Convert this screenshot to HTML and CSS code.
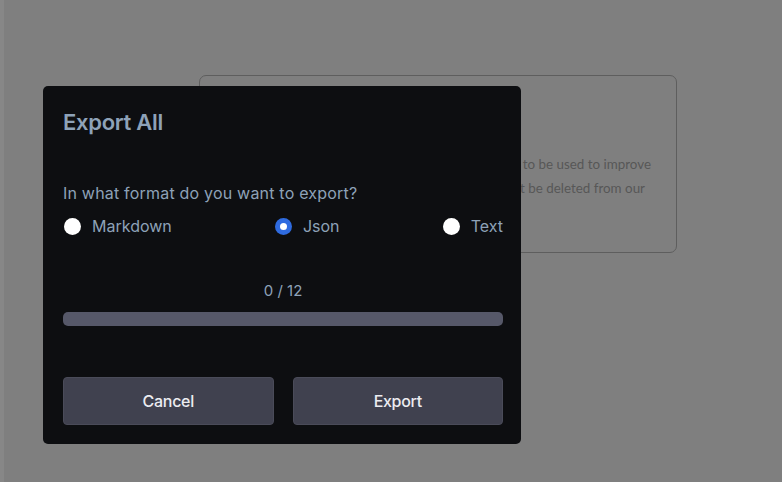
FILE: index.html
```html
<!DOCTYPE html>
<html lang="en">
<head>
<meta charset="utf-8">
<title>Export All</title>
<link rel="stylesheet" href="styles.css">
</head>
<body>
<div class="app">
  <div class="rail"></div>
  <main class="page">
    <section class="notice">
      <div class="notice-line">Conversations may be reviewed by our AI trainers to be used to improve</div>
      <div class="notice-line second">our systems. Please don't share sensitive info, it can't be deleted from our</div>
    </section>
  </main>

  <div class="modal" role="dialog" aria-labelledby="modal-title">
    <h2 class="modal-title" id="modal-title">Export All</h2>
    <p class="question">In what format do you want to export?</p>
    <div class="options">
      <label class="option"><span class="radio"></span><span>Markdown</span></label>
      <label class="option"><span class="radio checked"></span><span>Json</span></label>
      <label class="option"><span class="radio"></span><span>Text</span></label>
    </div>
    <div class="progress-label">0 / 12</div>
    <div class="progress"></div>
    <div class="actions">
      <button class="btn">Cancel</button>
      <button class="btn">Export</button>
    </div>
  </div>
</div>
</body>
</html>
```

FILE: styles.css
```css
* { box-sizing: border-box; }

html, body {
  margin: 0;
  padding: 0;
  width: 782px;
  height: 482px;
  overflow: hidden;
  background: #7f7f7f;
}

.app {
  position: relative;
  display: flex;
  width: 782px;
  height: 482px;
}

.rail {
  width: 4px;
  background: #878787;
  flex: none;
}

.page {
  flex: 1;
  padding: 75px 0 0 195px;
}

.notice {
  width: 478px;
  height: 178px;
  border: 1px solid #5e5e5e;
  border-radius: 7px;
  padding: 76px 25px 0 0;
  display: flex;
  flex-direction: column;
  align-items: flex-end;
  font-family: Lato, "Open Sans", sans-serif;
  font-size: 13.4px;
  line-height: 24px;
  color: #575757;
}

.notice-line {
  white-space: nowrap;
}

.notice-line.second {
  margin-right: 6px;
}

.modal {
  position: absolute;
  left: 43px;
  top: 86px;
  width: 478px;
  height: 358px;
  background: #0d0e11;
  border-radius: 5px;
  padding: 22px 18px 19px 20px;
  display: flex;
  flex-direction: column;
  font-family: Inter, "Noto Sans", sans-serif;
  color: #8ea2b8;
}

.modal-title {
  margin: 0;
  font-size: 22px;
  line-height: 28px;
  font-weight: 600;
  letter-spacing: -0.3px;
}

.question {
  margin: 47px 0 0;
  font-size: 16px;
  line-height: 20px;
  letter-spacing: 0.2px;
  white-space: nowrap;
}

.options {
  margin-top: 13px;
  display: flex;
  justify-content: space-between;
  align-items: center;
  height: 20px;
  padding-left: 1px;
}

.option {
  display: flex;
  align-items: center;
  gap: 11px;
  font-size: 16px;
  line-height: 20px;
}

.radio {
  width: 17px;
  height: 17px;
  border-radius: 50%;
  background: #ffffff;
  flex: none;
}

.radio.checked {
  background: #2f6be0;
  display: flex;
  align-items: center;
  justify-content: center;
}

.radio.checked::after {
  content: "";
  width: 7px;
  height: 7px;
  border-radius: 50%;
  background: #ffffff;
}

.progress-label {
  margin-top: 45px;
  text-align: center;
  font-size: 15px;
  line-height: 20px;
}

.progress {
  margin-top: 11px;
  height: 14px;
  border-radius: 5px;
  background: #565869;
}

.actions {
  margin-top: auto;
  display: flex;
  gap: 19px;
}

.btn {
  flex: 1;
  height: 48px;
  background: #40414f;
  border: 1px solid #4a4b59;
  border-radius: 4px;
  color: #ececf1;
  font-family: Inter, "Noto Sans", sans-serif;
  font-size: 16px;
  font-weight: 500;
  letter-spacing: -0.3px;
}
```
